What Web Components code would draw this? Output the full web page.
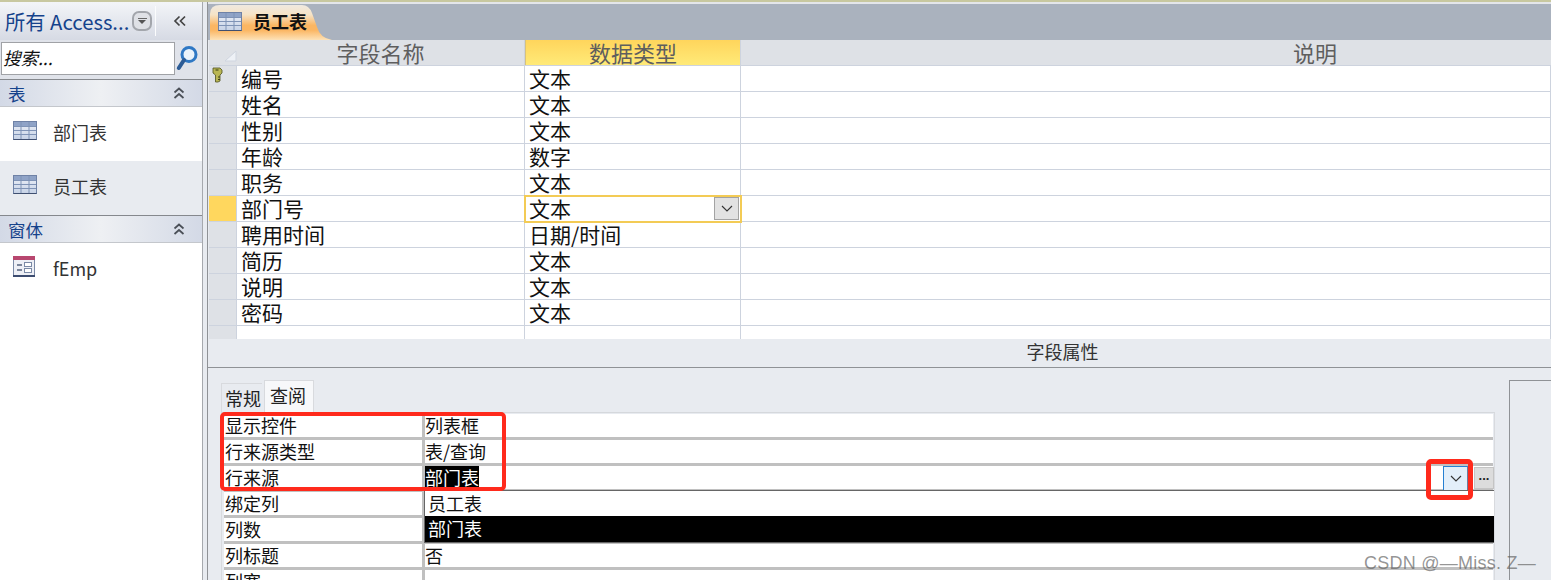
<!DOCTYPE html>
<html lang="zh"><head><meta charset="utf-8"><title>员工表</title>
<style>
html,body{margin:0;padding:0;background:#e8ebf0;}
body{width:1551px;height:580px;overflow:hidden;font-family:"Noto Sans CJK SC","Noto Sans",sans-serif;color:#111;}
</style></head><body>
<access-app>
  <nav-pane slot="nav">
    <nav-group label="表">
      <nav-item label="部门表" kind="table"></nav-item>
      <nav-item label="员工表" kind="table" active></nav-item>
    </nav-group>
    <nav-group label="窗体">
      <nav-item label="fEmp" kind="form"></nav-item>
    </nav-group>
  </nav-pane>
  <doc-tab slot="tabs">员工表</doc-tab>
  <design-grid slot="grid">
    <grid-row name="编号" type="文本" key></grid-row>
    <grid-row name="姓名" type="文本"></grid-row>
    <grid-row name="性别" type="文本"></grid-row>
    <grid-row name="年龄" type="数字"></grid-row>
    <grid-row name="职务" type="文本"></grid-row>
    <grid-row name="部门号" type="文本" current></grid-row>
    <grid-row name="聘用时间" type="日期/时间"></grid-row>
    <grid-row name="简历" type="文本"></grid-row>
    <grid-row name="说明" type="文本"></grid-row>
    <grid-row name="密码" type="文本"></grid-row>
    <grid-row></grid-row>
  </design-grid>
  <prop-pane slot="props">
    <prop-row label="显示控件" value="列表框"></prop-row>
    <prop-row label="行来源类型" value="表/查询"></prop-row>
    <prop-row label="行来源" value="部门表" selected></prop-row>
    <prop-row label="绑定列"></prop-row>
    <prop-row label="列数"></prop-row>
    <prop-row label="列标题" value="否"></prop-row>
    <prop-row label="列宽"></prop-row>
  </prop-pane>
</access-app>
<script>
const CJK='"Noto Sans CJK SC","Noto Sans",sans-serif';
function def(name,html){
  customElements.define(name,class extends HTMLElement{
    constructor(){super();this.attachShadow({mode:'open'});}
    connectedCallback(){this.shadowRoot.innerHTML=typeof html==='function'?html(this):html;}
  });
}
const tableIcon=(w=24,h=19)=>`<svg width="${w}" height="${h}" viewBox="0 0 24 19"><defs><linearGradient id="t" x1="0" y1="0" x2="0" y2="1"><stop offset="0" stop-color="#eef1f8"/><stop offset="1" stop-color="#c6d2e6"/></linearGradient></defs><rect x=".5" y=".5" width="23" height="18" fill="url(#t)" stroke="#6f82a6"/><rect x="1" y="1" width="22" height="4" fill="#8fa3c7"/><path d="M1 5.5h22M1 9.5h22M1 13.5h22M8 1v17M16 1v17" stroke="#7f93b6" fill="none"/><path d="M.5 18.5h23" stroke="#3f4f70"/></svg>`;
const formIcon=`<svg width="22" height="21" viewBox="0 0 22 21"><rect x=".5" y=".5" width="21" height="20" fill="#eef0f6" stroke="#7b8aa6"/><rect x="0" y="0" width="22" height="4" fill="#b8476f"/><rect x="0" y="19" width="22" height="2" fill="#3c4c70"/><path d="M4 9h5M4 14h5" stroke="#55637f" stroke-width="1.4"/><rect x="11.5" y="6.5" width="7" height="4" fill="#fff" stroke="#7b8aa6"/><rect x="11.5" y="12.5" width="7" height="4" fill="#fff" stroke="#7b8aa6"/></svg>`;
const dblUp=`<svg width="14" height="14" viewBox="0 0 14 14" fill="none" stroke="#4a4f57" stroke-width="1.7"><path d="M2.5 6.5 7 2.5l4.500 4M2.500 12 7 8l4.500 4"/></svg>`;
const chev=`<svg width="12" height="7" viewBox="0 0 12 7" fill="none" stroke="#333" stroke-width="1.100"><path d="M1 1l5 5 5-5"/></svg>`;

def('access-app',`<style>
:host{display:flex;flex-direction:column;width:1551px;height:580px;overflow:hidden;position:relative;}
.strip{height:2px;background:#c8c8a0;flex:none}
.main{flex:1;display:flex;min-height:0}
.sep{width:6px;flex:none;background:#e8ebf0;border-left:1px solid #a6a9ae;border-right:1px solid #8f9296;box-sizing:border-box}
.work{flex:1;min-width:0;display:flex;flex-direction:column}
.tabs{height:38px;flex:none;box-sizing:border-box;border-top:2px solid #e4e6ea;background:#aab2be;display:flex;align-items:flex-end;padding-left:2px}
.wm{position:absolute;left:1364px;top:552px;font:18px/22px "Liberation Sans",sans-serif;color:rgba(95,95,95,.68);white-space:nowrap;letter-spacing:.25px;z-index:6}
.box{position:absolute;border:4px solid #ff2a1c;border-radius:5px;box-sizing:border-box;z-index:5}
</style>
<div class="strip"></div>
<div class="main"><slot name="nav"></slot><div class="sep"></div>
<div class="work"><div class="tabs"><slot name="tabs"></slot></div><slot name="grid"></slot><slot name="props"></slot></div></div>
<div class="box" style="left:220px;top:412px;width:286px;height:79px"></div>
<div class="box" style="left:1426px;top:459px;width:47px;height:41px;border-width:5px"></div>
<div class="wm">CSDN @—Miss. Z—</div>`);

def('nav-pane',`<style>
:host{display:flex;flex-direction:column;width:202px;flex:none;background:#fff;box-sizing:border-box;overflow:hidden}
.head{height:38px;flex:none;display:flex;align-items:center;padding-left:5px;background:linear-gradient(#f3f5f8,#d6dae4);color:#15428b;font:20.300px/36px ${CJK};white-space:nowrap;position:relative;box-sizing:border-box}
.menu{margin-left:3px;width:20px;height:20px;border-radius:7px;border:2.500px solid #a3a6ac;background:#dfe1e6;box-sizing:border-box;display:flex;flex-direction:column;gap:1px;align-items:center;justify-content:center}
.menu b{display:block;width:9px;height:1px;background:#666}
.menu i{border:4px solid transparent;border-top:4px solid #555;border-bottom:0;}
.bar{width:1px;height:30px;background:#fbfcfd;margin-left:3px}
.coll{margin-left:auto;margin-right:15px;display:flex}
.search{height:39px;flex:none;background:#e0e3ea;display:flex;box-sizing:border-box;padding:2px 0 0 1px;gap:1px;align-items:flex-start}
.box{width:174px;height:33px;box-sizing:border-box;border:1px solid #a0a2a6;background:#fff;font:italic 17.500px/29px ${CJK};color:#111;padding-left:1px}
.lens{margin-top:3px}
</style>
<div class="head">所有 Access...<span class="menu"><b></b><i></i></span><span class="bar"></span>
<span class="coll"><svg width="14" height="12" viewBox="0 0 14 12" fill="none" stroke="#444" stroke-width="1.700"><path d="M6.500 1.500 2 6l4.500 4.500M12 1.500 7.500 6l4.500 4.500"/></svg></span></div>
<div class="search"><div class="box">搜索...</div>
<svg class="lens" width="22" height="26" viewBox="0 0 22 26"><circle cx="13" cy="9.500" r="7" fill="#eaf3fb" stroke="#2f78c4" stroke-width="3"/><path d="M8 15 2.800 23" stroke="#2c5c96" stroke-width="4" stroke-linecap="round"/></svg></div>
<slot></slot>`);

def('nav-group',h=>`<style>
:host{display:block}
.t{height:28px;box-sizing:border-box;border-top:1px solid #85888d;border-bottom:1px solid #c4c7cc;background:linear-gradient(90deg,#d3d9e6,#eef0f3 50%,#d3d9e6);color:#15428b;font:17.500px/25px ${CJK};padding:0 16px 0 8px;display:flex;justify-content:space-between;align-items:center}
</style><div class="t"><span>${h.getAttribute('label')}</span>${dblUp}</div><slot></slot>`);

def('nav-item',h=>`<style>
:host{display:flex;height:54px;align-items:center;padding-left:13px;gap:16px;color:#333;font:18px/26px ${CJK};background:${h.hasAttribute('active')?'#e8ebf0':'#fff'};box-sizing:border-box}
svg{display:block;margin-top:-8px}
span{margin-top:-4px}
</style>${h.getAttribute('kind')==='form'?formIcon.replace('<svg','<svg style="margin-right:2px;margin-top:-8px"'):tableIcon()}<span>${h.getAttribute('label')}</span>`);

def('doc-tab',`<style>
:host{display:flex;align-items:center;height:35px;width:122px;box-sizing:border-box;padding:0 0 3px 8px;gap:11px;background:linear-gradient(#efe9e0,#f6e3c6 28%,#fbb663 58%,#fbb663 72%,#fde2b8);clip-path:path("M0 35V9Q0 0 10 0H92Q99 0 102 8L107 22Q110 33 122 35Z");font:700 18px/30px ${CJK};color:#111;white-space:nowrap}
</style>${tableIcon(24,19)}<span><slot></slot></span>`);

def('design-grid',`<style>
:host{display:block;height:299px;overflow:hidden;background:#fff;margin-left:1px;box-sizing:border-box}
.h{display:grid;grid-template-columns:28px 288px 216px 1fr;height:26px;background:#dee1e6;border-bottom:1px solid #cdd3de;box-sizing:border-box;font:22px/24px ${CJK};color:#5e5e5e;text-align:center}
.h div{border-right:1px solid #cdd3de;box-sizing:border-box}
.c{position:relative}
.c svg{position:absolute;right:0;bottom:3px}
.s{background:linear-gradient(#ffd55c,#ffea78);border-left:1px solid #d8c27a}
</style>
<div class="h"><div class="c" style="border:0"><svg width="14" height="12" viewBox="0 0 14 12" style="right:0"><path d="M13 1v10H2z" fill="#eef1f6" stroke="#cfd5df"/></svg></div><div>字段名称</div><div class="s">数据类型</div><div style="border:0;padding-left:338px">说明</div></div>
<slot></slot>`);

def('grid-row',h=>{
 const n=h.getAttribute('name')||'',t=h.getAttribute('type')||'',cur=h.hasAttribute('current'),k=h.hasAttribute('key');
 return `<style>
:host{display:grid;grid-template-columns:28px 288px 216px 1fr;height:26px;box-sizing:border-box;font:21px/26px ${CJK};color:#111;background:#fff}
div{border-right:1px solid #cdd3de;border-bottom:1px solid #cdd3de;box-sizing:border-box;white-space:nowrap;position:relative;padding-left:4px}
div span.x{display:block;margin-top:-1px}
.sel{background:${cur?'#ffd75e':'#dee1e6'};padding:0;border-right:1px solid #cdd3de}
.t{padding-left:4px}
.cur{outline:2px solid #f3cb55;outline-offset:-1px;z-index:1}
.btn{position:absolute;right:1px;top:1px;width:25px;height:23px;box-sizing:border-box;border:1px solid #a3a3a3;background:#e2e2e2;padding:0;display:flex;align-items:center;justify-content:center;overflow:hidden}
svg.k{position:absolute;left:2px;top:1px}
</style>
<div class="sel">${k?`<svg class="k" width="12" height="16" viewBox="0 0 12 16"><path d="M2 1h7l2 2v3L9 8v6l-2 1H4.500V8L2 6z" fill="#b9b653" stroke="#4e5120" stroke-width=".8"/><path d="M4.500 3h3" stroke="#5a5c22" stroke-width="1.400"/><path d="M7 10h2M7 12.500h2" stroke="#3f4118"/></svg>`:''}</div>
<div><span class="x">${n}</span></div>
<div class="t ${cur?'cur':''}"><span class="x">${t}</span>${cur?`<span class="btn">${chev}</span>`:''}</div>
<div></div>`});

def('prop-pane',`<style>
:host{display:block;background:#e8ebf0;position:relative;flex:1;min-height:0}
.title{height:29px;box-sizing:border-box;border-bottom:1px solid #8f9296;padding-left:366px;text-align:center;font:18px/25px ${CJK};color:#333}
.body{display:flex;padding:12px 0 0 13px}
.left{width:1274px;flex:none}
.tabs{display:flex;height:32px;align-items:flex-end;font:18px/28px ${CJK};color:#222}
.tb{box-sizing:border-box;white-space:nowrap}
.tb.a{height:32px;background:#f7f8fa;border:1px solid #d8dade;border-bottom:0;width:50px;margin-left:2px;padding:0 0 0 5px;line-height:28px}
.tb.n{height:29px;width:41px;padding-left:3px;background:#e8ebf0;border:1px solid #d8dade;border-right:0;border-bottom:0}
.tbl{border:1px solid #d8dade;border-top:1px solid #d5d8dc;padding:1px 1px 0 2px;background:#e8ebf0;height:200px;overflow:hidden;box-sizing:border-box;position:relative}
.prev{flex:none;margin-left:14px;width:60px;height:220px;border:1px solid #8f9296;border-right:0;border-bottom:0;box-sizing:border-box}
.drop{position:absolute;left:202px;top:77px;width:1071px;height:53px;box-sizing:border-box;border:1px solid #666;background:#fff;font:18px/24px ${CJK};z-index:2}
.drop div{height:25px;padding-left:3px}
.drop .on{height:26px;background:#000;color:#fff}
.arrow{position:absolute;left:1221px;top:53px;width:25px;height:24px;box-sizing:border-box;background:#e3effa;border-left:1px solid #2680d2;border-top:1px solid #2680d2;border-right:1px solid #6a7fa0;display:flex;align-items:center;justify-content:center;z-index:2}
.more{position:absolute;left:1252px;top:54px;width:20px;height:22px;background:#dcdcdc;border:1px solid #c4c4c4;box-sizing:border-box;font:700 13px/16px "Liberation Sans",sans-serif;text-align:center;color:#222;z-index:2}
</style>
<div class="title">字段属性</div>
<div class="body"><div class="left">
<div class="tabs"><div class="tb n">常规</div><div class="tb a">查阅</div></div>
<div class="tbl"><slot></slot>
<div class="arrow">${chev}</div><div class="more">...</div>
<div class="drop"><div>员工表</div><div class="on">部门表</div></div>
</div></div><div class="prev"></div></div>`);

def('prop-row',h=>{
 const v=h.getAttribute('value')||'',s=h.hasAttribute('selected');
 return `<style>
:host{display:grid;grid-template-columns:198px 1fr;column-gap:3px;height:26px;box-sizing:border-box;border-bottom:3px solid #c0c0c0;background:#c0c0c0;font:18px/22px ${CJK};color:#111}
div{background:#fff;height:23px;white-space:nowrap}
div.l{padding-left:1px}
.sel{background:#000;color:#fff;display:inline-block;height:21px;line-height:22px}
</style><div class="l">${h.getAttribute('label')}</div><div>${s?`<span class="sel">${v}</span>`:v}</div>`});
</script>
</body></html>
